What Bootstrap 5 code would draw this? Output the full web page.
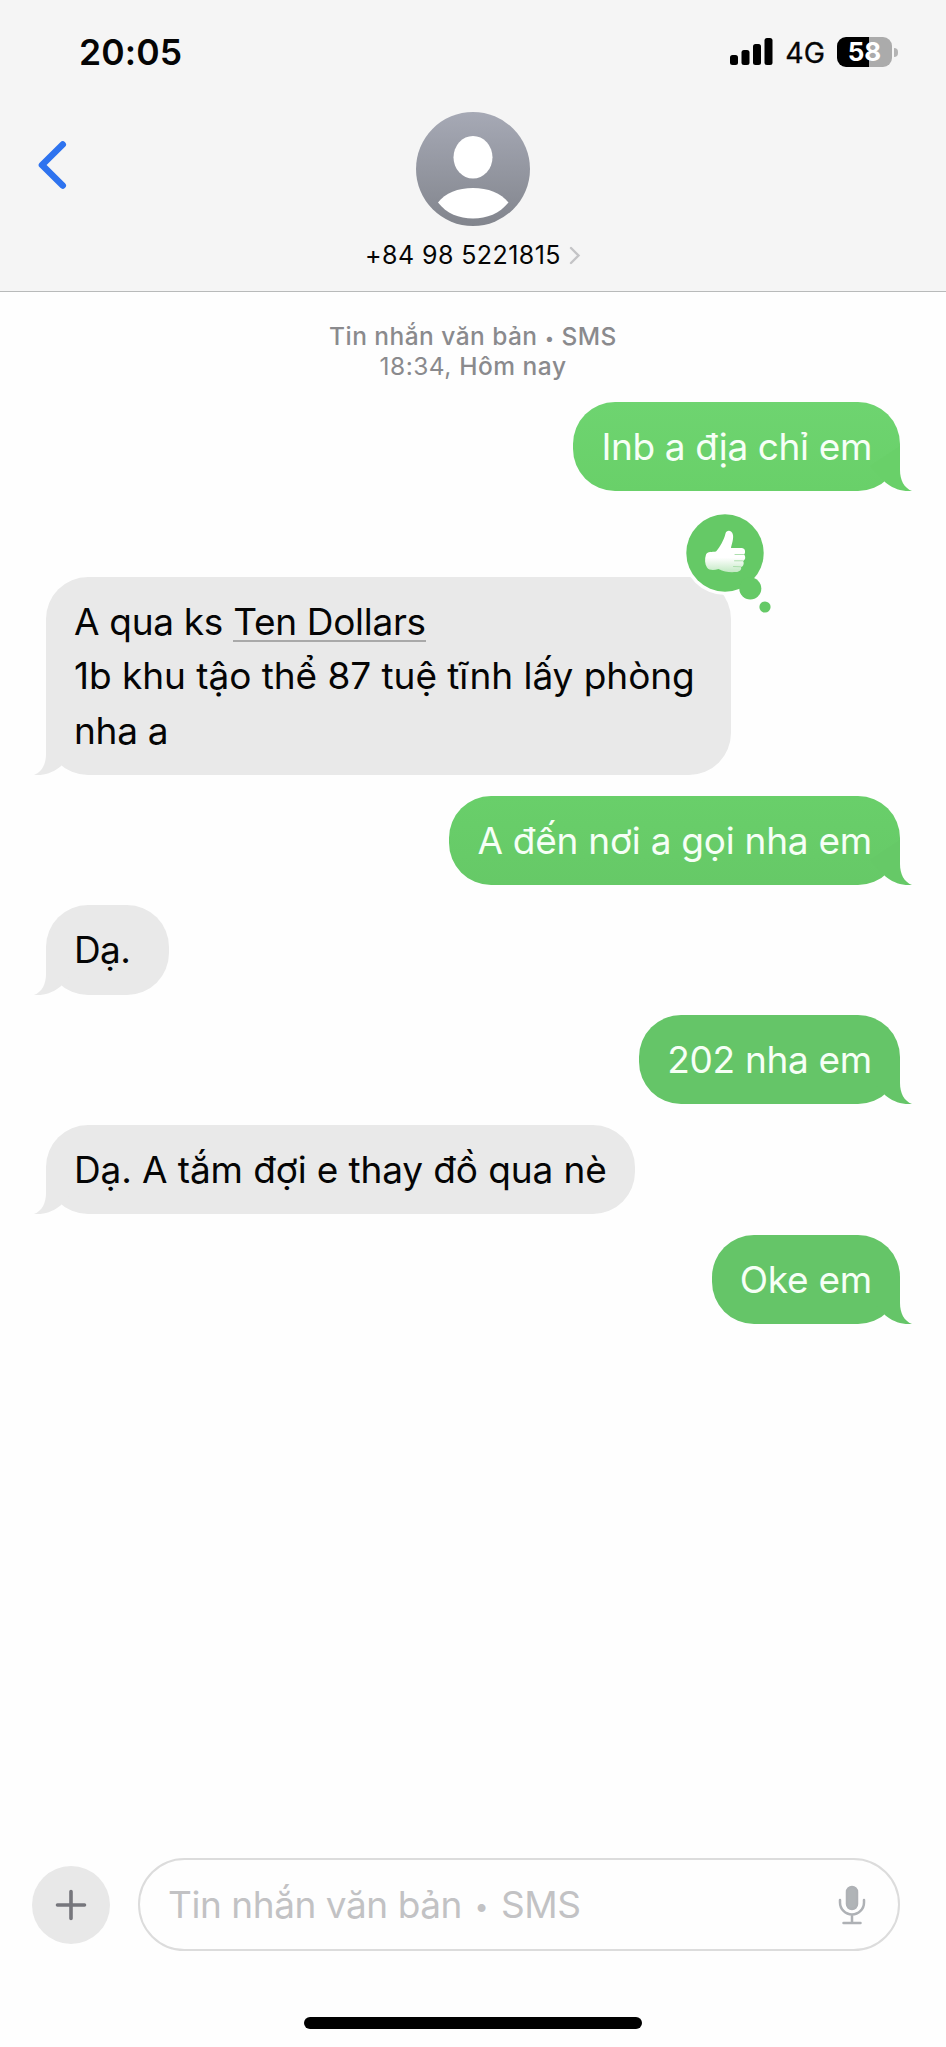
<!DOCTYPE html>
<html lang="vi">
<head>
<meta charset="utf-8">
<meta name="viewport" content="width=device-width, initial-scale=1">
<title>Tin nhắn</title>
<link href="https://cdn.jsdelivr.net/npm/bootstrap@5.3.0/dist/css/bootstrap.min.css" rel="stylesheet">
<style>
  body { font-family: Inter, "Liberation Sans", sans-serif; background: #fefefe; color: #050505; height: 2047px; overflow: hidden; }
  svg { display: block; flex: none; }
  .top-area { height: 292px; background: #f5f5f5; border-bottom: 1px solid #b8baba; }
  .status { height: 104px; padding: 0 48px 0 79px; }
  .clock { font-size: 35.5px; font-weight: 600; line-height: 102px; padding-top: 2px; letter-spacing: .1px; }
  .net { font-size: 28.5px; line-height: 1; margin: 0 12px 0 12px; padding-top: 2px; -webkit-text-stroke: .3px #050505; }
  .battery { width: 55px; height: 30px; border-radius: 9px; background: linear-gradient(90deg, #000 58%, #ababab 58%); font-size: 26px; font-weight: 700; line-height: 30px; color: #fff; }
  .nub { width: 4px; height: 9px; border-radius: 0 4px 4px 0; background: #b4b4b4; margin-left: 2px; }
  .contact-row { height: 186px; padding: 8px 0 0; }
  .side { width: 100px; padding: 28px 0 0 36px; }
  .number { font-size: 25px; line-height: 30px; margin-top: 14px; letter-spacing: .42px; }
  .stamp { font-size: 24.5px; line-height: 30px; color: #8a8a8d; padding-top: 29px; height: 110px; }
  .l1, .l2 { height: 30px; }
  .l1 { letter-spacing: .45px; }
  .l2 { letter-spacing: .5px; }
  .dot { font-size: .68em; line-height: 1; display: inline-block; text-align: center; vertical-align: .08em; letter-spacing: 0; }
  .l1 .dot { width: 10px; }
  .thread { gap: 20.7px; padding: 0 46px; }
  .bubble { font-size: 37px; line-height: 54.4px; padding: 18px 28px 16.7px; border-radius: 42px; white-space: nowrap; }
  .sent { color: #f6fff6; background: var(--g); }
  .got { background: #e9e9e9; }
  .m1 { letter-spacing: -.37px; }
  .m2 { letter-spacing: -.05px; width: 684.5px; padding-bottom: 17px; margin-top: 65px; }
  .m3, .m7 { letter-spacing: -.25px; }
  .m4 { letter-spacing: -.6px; width: 123px; }
  .m5 { letter-spacing: -.3px; }
  .m6 { letter-spacing: -.12px; }
  .tight { letter-spacing: -.3px; }
  .tail { position: absolute; bottom: 0; width: 52px; height: 45px; }
  .sent .tail { right: -12px; fill: var(--t); }
  .got .tail { left: -12px; transform: scaleX(-1); fill: #e9e9e9; }
  .reaction { position: absolute; right: -45px; top: -69px; }
  .place { border-bottom: 2px solid #a9a9a9; display: inline-block; line-height: 36px; }
  .compose { padding: 0 46px 0 32px; gap: 28px; margin-bottom: 66px; }
  .plus { width: 78px; height: 78px; background: #e8e8e8; }
  .field { height: 93px; border: 2px solid #dcdcdc; border-radius: 47px; padding: 0 32px 0 28px; font-size: 37px; color: #c2c2c4; letter-spacing: -.45px; }
  .field .dot { width: 39px; vertical-align: .12em; }
  .home-bar { width: 338px; height: 12px; border-radius: 6px; background: #000; margin-bottom: 18px; }
</style>
</head>
<body class="d-flex flex-column">
<header class="top-area flex-shrink-0">
  <div class="status d-flex justify-content-between align-items-center">
    <div class="clock">20:05</div>
    <div class="d-flex align-items-center">
      <svg width="43" height="28" viewBox="0 0 43 28"><rect x="0" y="17" width="8" height="10" rx="2.5"/><rect x="11.5" y="12" width="8" height="15" rx="2.5"/><rect x="23" y="6" width="8" height="21" rx="2.5"/><rect x="34.5" y="0" width="8" height="27" rx="2.5"/></svg>
      <span class="net">4G</span>
      <div class="battery text-center">58</div>
      <div class="nub"></div>
    </div>
  </div>
  <div class="contact-row d-flex justify-content-between">
    <div class="side"><svg width="32" height="50" viewBox="0 0 32 50"><path d="M26.7 4.5 6 25l20.7 20.5" fill="none" stroke="#2e73ef" stroke-width="6.6" stroke-linecap="round" stroke-linejoin="round"/></svg></div>
    <div class="d-flex flex-column align-items-center">
      <svg width="114" height="114" viewBox="0 0 114 114">
        <defs><linearGradient id="av" x1="0" y1="0" x2="0" y2="1"><stop offset="0" stop-color="#a6a9b5"/><stop offset="1" stop-color="#82858d"/></linearGradient></defs>
        <circle cx="57" cy="57" r="57" fill="url(#av)"/>
        <ellipse cx="57" cy="45.3" rx="19.5" ry="21.3" fill="#fff"/>
        <path d="M22 90.500C29 81 42 76 57 76s28 5 35.500 14.500C83.500 101.500 71 106.500 57 106.500S30.500 101.500 22 90.500Z" fill="#fff"/>
      </svg>
      <div class="number d-flex align-items-center"><span>+84 98 5221815</span><svg class="ms-2" width="12" height="20" viewBox="0 0 12 20"><path d="M2 3l7.500 7.500L2 18" fill="none" stroke="#c4c4c6" stroke-width="2.400" stroke-linecap="round"/></svg></div>
    </div>
    <div class="side"></div>
  </div>
</header>

<div class="stamp text-center flex-shrink-0"><div class="l1" style="font-weight:500">Tin nhắn văn bản <span class="dot">•</span> SMS</div><div class="l2">18:34, <span style="font-weight:500">Hôm nay</span></div></div>

<main class="thread d-flex flex-column flex-grow-1">
  <div class="bubble sent position-relative align-self-end m1" style="--g:linear-gradient(#6ed470,#69d069);--t:#69d069">Inb a địa chỉ em<svg class="tail" viewBox="0 0 52 45"><path d="M40 0V24C40 34 44 42 52 45C42 46 32 42 25.500 36.500L10 20Z"/></svg></div>
  <div class="bubble got position-relative align-self-start m2"><span class="tight">A qua ks <span class="place">Ten Dollars</span></span><br>1b khu tậo thể 87 tuệ tĩnh lấy phòng<br><span class="tight">nha a</span><svg class="tail" viewBox="0 0 52 45"><path d="M40 0V24C40 34 44 42 52 45C42 46 32 42 25.500 36.500L10 20Z"/></svg>
    <svg class="reaction" width="94" height="110" viewBox="0 0 94 110">
      <defs><linearGradient id="th" x1="0" y1="0" x2="0" y2="1"><stop offset=".65" stop-color="#fff"/><stop offset="1" stop-color="#c2e9c3"/></linearGradient></defs>
      <circle cx="43" cy="45" r="42" fill="#fefefe"/>
      <circle cx="43" cy="45" r="38.700" fill="#65c966"/>
      <circle cx="68.300" cy="80.500" r="11" fill="#65c966"/>
      <circle cx="83" cy="99" r="5.600" fill="#65c966"/>
      <path d="M24 46.500C25.500 43.500 30 44 34 43.500C38 39 42 32 43.500 25.500C44.500 21.500 50 22 51 27C51.700 31.500 49.500 36.500 49 40L60 40C64 40.500 63.500 45.500 62 46.500C64 48.500 63.500 52 61 53C62.500 55 61.500 58.500 59 59C60 61.500 57.500 64 54 64C48 64.500 42 64 36.500 61C32 62.500 27 62.500 25 59.500C22.800 56 22.500 51 24 46.500Z" fill="url(#th)"/>
      <path d="M53 46.500L61.500 46.500M52.500 52.800L60.500 52.800M51.500 58.500L58.500 58.800" stroke="#a5dca6" stroke-width=".9" fill="none" stroke-linecap="round"/>
    </svg>
  </div>
  <div class="bubble sent position-relative align-self-end m3" style="--g:linear-gradient(#69cf6a,#66c967);--t:#66c967">A đến nơi a gọi nha em<svg class="tail" viewBox="0 0 52 45"><path d="M40 0V24C40 34 44 42 52 45C42 46 32 42 25.500 36.500L10 20Z"/></svg></div>
  <div class="bubble got position-relative align-self-start m4">Dạ.<svg class="tail" viewBox="0 0 52 45"><path d="M40 0V24C40 34 44 42 52 45C42 46 32 42 25.500 36.500L10 20Z"/></svg></div>
  <div class="bubble sent position-relative align-self-end m5" style="--g:#65c568;--t:#65c568">202 nha em<svg class="tail" viewBox="0 0 52 45"><path d="M40 0V24C40 34 44 42 52 45C42 46 32 42 25.500 36.500L10 20Z"/></svg></div>
  <div class="bubble got position-relative align-self-start m6">Dạ. A tắm đợi e thay đồ qua nè<svg class="tail" viewBox="0 0 52 45"><path d="M40 0V24C40 34 44 42 52 45C42 46 32 42 25.500 36.500L10 20Z"/></svg></div>
  <div class="bubble sent position-relative align-self-end m7" style="--g:#65c568;--t:#65c568">Oke em<svg class="tail" viewBox="0 0 52 45"><path d="M40 0V24C40 34 44 42 52 45C42 46 32 42 25.500 36.500L10 20Z"/></svg></div>
</main>

<footer class="flex-shrink-0">
  <div class="compose d-flex align-items-center">
    <div class="plus rounded-circle d-flex align-items-center justify-content-center flex-shrink-0"><svg width="32" height="32" viewBox="0 0 32 32"><path d="M16 2.500v27M2.500 16h27" stroke="#76767c" stroke-width="3.600" stroke-linecap="round"/></svg></div>
    <div class="field d-flex align-items-center justify-content-between flex-grow-1"><div>Tin nhắn văn bản<span class="dot">•</span>SMS</div>
      <svg width="28" height="40" viewBox="0 0 28 40"><g stroke="#aeb1b5" fill="none" stroke-width="2.500" stroke-linecap="round"><rect x="9" y="2" width="10" height="22" rx="5" fill="#b0b4b7"/><path d="M2 15v2.500a12 12 0 0 0 24 0V15M14 30v7M5.500 38h17"/></g></svg>
    </div>
  </div>
  <div class="home-bar mx-auto"></div>
</footer>
<script src="https://cdn.jsdelivr.net/npm/bootstrap@5.3.0/dist/js/bootstrap.bundle.min.js"></script>
</body>
</html>
